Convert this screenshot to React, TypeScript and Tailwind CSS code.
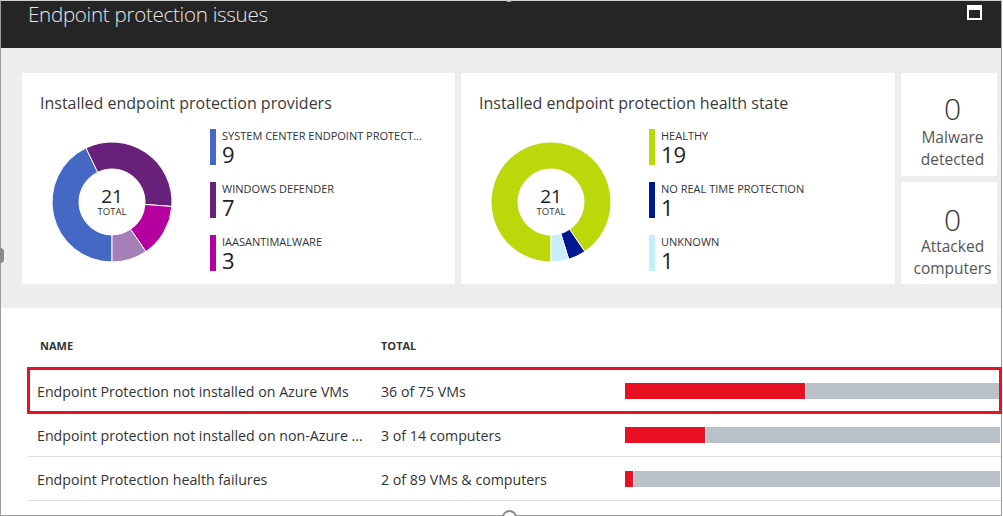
import React from "react";

type Seg = { v: number; c: string };

function pt(cx: number, cy: number, r: number, a: number): [number, number] {
  const rad = (a * Math.PI) / 180;
  return [cx + r * Math.sin(rad), cy - r * Math.cos(rad)];
}

function arcPath(cx: number, cy: number, R: number, r: number, a0: number, a1: number) {
  const large = a1 - a0 > 180 ? 1 : 0;
  const [x0, y0] = pt(cx, cy, R, a0);
  const [x1, y1] = pt(cx, cy, R, a1);
  const [x2, y2] = pt(cx, cy, r, a1);
  const [x3, y3] = pt(cx, cy, r, a0);
  return `M${x0} ${y0} A${R} ${R} 0 ${large} 1 ${x1} ${y1} L${x2} ${y2} A${r} ${r} 0 ${large} 0 ${x3} ${y3} Z`;
}

function Donut({ segs, total }: { segs: Seg[]; total: number }) {
  let a = 180;
  const paths = segs.map((s, i) => {
    const a0 = a;
    const a1 = a + (s.v / total) * 360;
    a = a1;
    return <path key={i} d={arcPath(60, 60, 60, 33, a0, a1)} fill={s.c} stroke="#fff" strokeWidth={1} />;
  });
  return (
    <div className="relative w-[120px] h-[120px] shrink-0">
      <svg width="120" height="120" viewBox="0 0 120 120">
        {paths}
      </svg>
      <div className="absolute inset-0 flex flex-col items-center justify-center">
        <div className="text-[19px] leading-[20px] text-[#222]">{total}</div>
        <div className="text-[9.5px] leading-[12px] text-[#333]">TOTAL</div>
      </div>
    </div>
  );
}

function LegendItem({ color, label, value }: { color: string; label: string; value: number }) {
  return (
    <div className="flex h-[36px]">
      <div className="w-[6px] h-full shrink-0" style={{ background: color }} />
      <div className="flex flex-col pl-[6px]">
        <div className="text-[11px] leading-[14px] text-[#333] whitespace-nowrap">{label}</div>
        <div className="text-[22px] leading-[22px] text-[#222]">{value}</div>
      </div>
    </div>
  );
}

function ChartCard({
  title,
  segs,
  labels,
  w,
}: {
  title: string;
  segs: Seg[];
  labels: string[];
  w: string;
}) {
  return (
    <div className={`bg-white h-[211px] ${w} pl-[18px] pt-[20px]`}>
      <div className="text-[16px] leading-[21px] text-[#3a3a3a] whitespace-nowrap">{title}</div>
      <div className="flex items-start mt-[15px]">
        <div className="ml-[12px] mt-[13px]">
          <Donut segs={segs} total={21} />
        </div>
        <div className="ml-[38px] flex flex-col gap-[17px]">
          {segs.slice(0, 3).map((s, i) => (
            <LegendItem key={i} color={s.c} label={labels[i]} value={s.v} />
          ))}
        </div>
      </div>
    </div>
  );
}

function StatCard({
  n,
  l1,
  l2,
  h,
  top,
  lead,
}: {
  n: number;
  l1: string;
  l2: string;
  h: string;
  top: string;
  lead: string;
}) {
  return (
    <div className={`bg-white w-[96px] ${h} ${top} pl-[7px] flex flex-col items-center text-center`}>
      <div className={`text-[30px] ${lead} font-light text-[#333]`}>{n}</div>
      <div className="text-[15.5px] leading-[22px] text-[#555]">{l1}</div>
      <div className="text-[15.5px] leading-[22px] text-[#555]">{l2}</div>
    </div>
  );
}

const rows = [
  { name: "Endpoint Protection not installed on Azure VMs", total: "36 of 75 VMs", a: 36, b: 75 },
  { name: "Endpoint protection not installed on non-Azure ...", total: "3 of 14 computers", a: 3, b: 14 },
  { name: "Endpoint Protection health failures", total: "2 of 89 VMs & computers", a: 2, b: 89 },
];

export default function App() {
  return (
    <div
      className="relative w-[1003px] h-[516px] bg-white overflow-hidden"
      style={{ fontFamily: '"Open Sans", "Noto Sans", sans-serif' }}
    >
      <div className="w-[1002px] h-[516px] border-x border-b border-x-[#9c9c9c] border-b-[#9c9c9c] border-t border-t-[#cfcfcf] flex flex-col">
        {/* header */}
        <div className="h-[47px] shrink-0 bg-[#252525] flex items-start justify-between pl-[27px] pr-[19px]">
          <div className="text-[20.6px] leading-[26px] font-light text-[#e6e6e6] tracking-[-0.3px]">
            Endpoint protection issues
          </div>
          <div className="mt-[4px] w-[15px] h-[15px] border-2 border-t-[5px] border-white bg-[#252525]" />
        </div>

        {/* gray tiles area */}
        <div className="h-[260px] shrink-0 bg-[#ededed] pt-[25px] pl-[21px]">
          <div className="flex gap-[6px]">
            <ChartCard
              w="w-[433px]"
              title="Installed endpoint protection providers"
              segs={[
                { v: 9, c: "#4668c5" },
                { v: 7, c: "#68217a" },
                { v: 3, c: "#b4009e" },
                { v: 2, c: "#a67eb6" },
              ]}
              labels={["SYSTEM CENTER ENDPOINT PROTECT...", "WINDOWS DEFENDER", "IAASANTIMALWARE"]}
            />
            <ChartCard
              w="w-[434px]"
              title="Installed endpoint protection health state"
              segs={[
                { v: 19, c: "#bad80a" },
                { v: 1, c: "#00188f" },
                { v: 1, c: "#c9eef9" },
              ]}
              labels={["HEALTHY", "NO REAL TIME PROTECTION", "UNKNOWN"]}
            />
            <div className="flex flex-col gap-[6px]">
              <StatCard n={0} l1="Malware" l2="detected" h="h-[103px]" top="pt-[19px]" lead="leading-[34px]" />
              <StatCard n={0} l1="Attacked" l2="computers" h="h-[102px]" top="pt-[23px]" lead="leading-[30px]" />
            </div>
          </div>
        </div>

        {/* table */}
        <div className="flex-1 bg-white pl-[27px]">
          <div className="h-[61px] flex items-end pb-[16px] text-[11px] leading-[14px] font-bold text-[#333]">
            <div className="w-[353px] pl-[12px]">NAME</div>
            <div>TOTAL</div>
          </div>
          {rows.map((r, i) => {
            const red = Math.round(((375 * r.a) / r.b) * 10) / 10;
            return (
              <div
                key={i}
                className={`relative h-[44px] flex items-center border-b border-[#dedede] text-[14.2px] text-[#333] ${
                  i === 0 ? "border-t border-t-[#a8d4ea] border-dashed" : ""
                }`}
              >
                <div className="w-[353px] pl-[9px] whitespace-nowrap pt-[2px]">{r.name}</div>
                <div className="w-[244px] whitespace-nowrap pt-[2px]">{r.total}</div>
                <div className="w-[375px] h-[16px] flex">
                  <div className="h-full bg-[#e81123] shrink-0" style={{ width: red }} />
                  <div className="h-full flex-1 bg-[#bac1c9] border-l border-white" />
                </div>
                {i === 0 && (
                  <div className="absolute -left-[1px] -top-[3px] -right-[1px] -bottom-[2px] border-[3px] border-[#e81123] pointer-events-none" />
                )}
              </div>
            );
          })}
        </div>
      </div>

      {/* resize handles */}
      <div className="absolute left-0 top-[248px] w-[4px] h-[15px] rounded-r-full bg-[#8a8a8a]" />
      <div className="absolute left-[502px] top-[510px] w-[15px] h-[15px] rounded-full border-2 border-[#8a8a8a] bg-white" />
      <div className="absolute left-[504px] -top-[4px] w-[10px] h-[6px] rounded-b-full bg-[#cfcfcf]" />
    </div>
  );
}
